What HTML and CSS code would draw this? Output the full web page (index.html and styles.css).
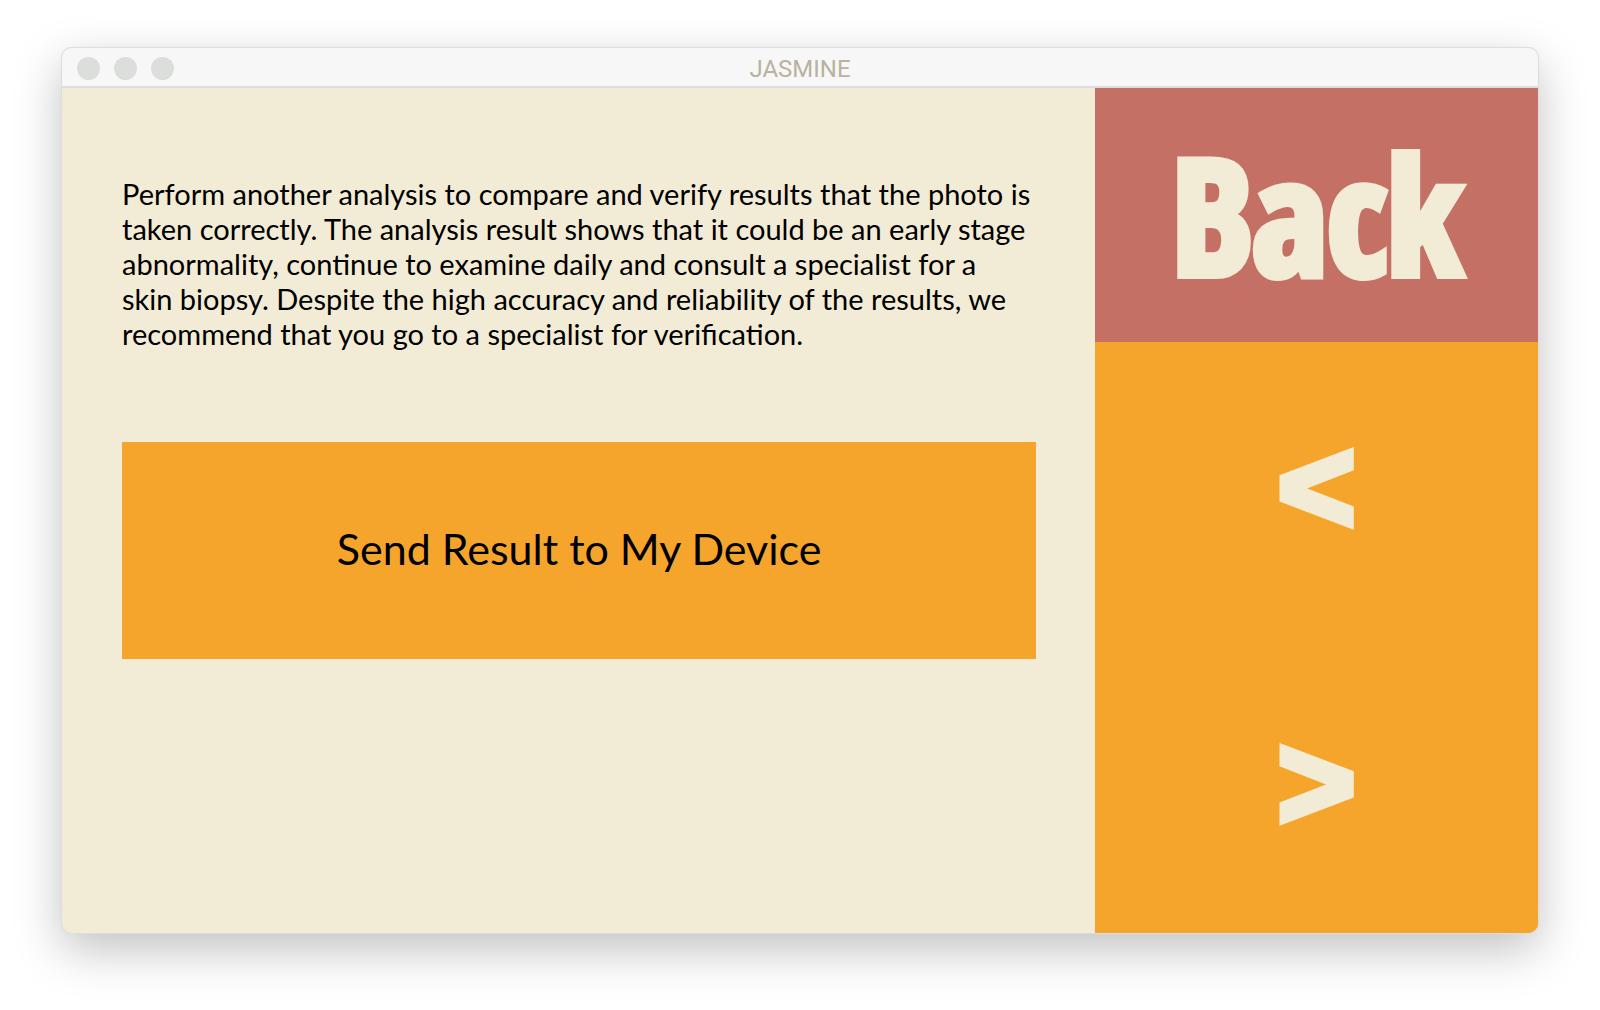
FILE: index.html
```html
<!DOCTYPE html>
<html lang="en">
<head>
<meta charset="utf-8">
<meta name="viewport" content="width=device-width, initial-scale=1">
<title>JASMINE</title>
<link rel="stylesheet" href="styles.css">
</head>
<body>
<div class="window">
  <header class="titlebar">
    <div class="lights" aria-hidden="true">
      <span class="light"></span><span class="light"></span><span class="light"></span>
    </div>
    <h1 class="title">JASMINE</h1>
  </header>
  <div class="content">
    <main class="result">
      <p class="advice">Perform another analysis to compare and verify results that the photo is<br>
        taken correctly. The analysis result shows that it could be an early stage<br>
        abnormality, continue to examine daily and consult a specialist for a<br>
        skin biopsy. Despite the high accuracy and reliability of the results, we<br>
        recommend that you go to a specialist for verification.</p>
      <button class="send" type="button">Send Result to My Device</button>
    </main>
    <nav class="side">
      <button class="back" type="button">Back</button>
      <button class="arrow" type="button">&lt;</button>
      <button class="arrow" type="button">&gt;</button>
    </nav>
  </div>
</div>
</body>
</html>
```
FILE: styles.css
```css
* { box-sizing: border-box; }

body {
  margin: 0;
  min-height: 100vh;
  padding: 48px 62px 77px;
  display: flex;
  background: #fff;
  color: #000;
  font-family: Futura, Lato, sans-serif;
}

button {
  margin: 0;
  padding: 0 0 4px;
  border: 0;
  color: inherit;
  cursor: pointer;
}

.window {
  flex: 1;
  display: flex;
  flex-direction: column;
  border-radius: 10px;
  overflow: hidden;
  background: #f2ebd5;
  box-shadow: 0 0 1px 1px #dcdedc, 0 16px 48px rgba(0, 0, 0, 0.25);
}

.titlebar {
  height: 40px;
  padding: 0 15px;
  display: grid;
  grid-template-columns: 1fr auto 1fr;
  align-items: center;
  background: #f7f7f7;
  border-bottom: 2px solid #dcdedc;
}

.lights { display: flex; gap: 14px; padding-top: 2px; }

.light {
  width: 23px;
  height: 23px;
  border-radius: 50%;
  background: #dcdedc;
}

.title {
  margin: 0;
  padding-top: 4px;
  font: 400 24px/28px Roboto, sans-serif;
  color: #b9b29f;
}

.content {
  flex: 1;
  display: grid;
  grid-template-columns: 7fr 3fr;
}

.result { padding: 88px 59px 60px 60px; }

.advice {
  margin: 0 0 91px;
  font-size: 29px;
  line-height: 35px;
  white-space: nowrap;
}

.send {
  display: block;
  width: 100%;
  height: 217px;
  background: #f5a52b;
  font-family: inherit;
  font-size: 43px;
}

.side {
  display: grid;
  grid-template-rows: 30fr 35fr 35fr;
  background: #f5a52b;
  color: #f2ebd5;
}

.back {
  background: #c57065;
  font: 900 160px/1 Impact, "Noto Sans ExtraCondensed Black", "Noto Sans ExtraCondensed", "Open Sans Condensed", "Roboto Condensed", Lato, sans-serif;
  -webkit-text-stroke: 8px #f2ebd5;
}

.arrow {
  background: #f5a52b;
  font: 900 132px/1 "Liberation Sans", sans-serif;
  -webkit-text-stroke: 8px #f2ebd5;
}
```
